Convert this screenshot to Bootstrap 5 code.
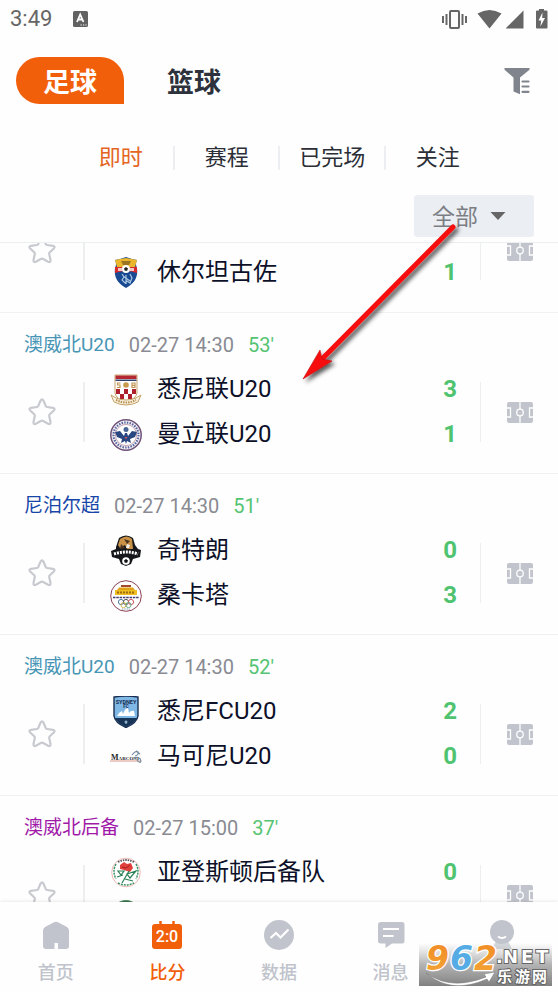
<!DOCTYPE html>
<html lang="zh-CN">
<head>
<meta charset="utf-8">
<meta name="viewport" content="width=device-width, initial-scale=1">
<title>比分</title>
<link href="https://cdn.jsdelivr.net/npm/bootstrap@5.3.0/dist/css/bootstrap.min.css" rel="stylesheet">
<style>
  body { font-family: Roboto, "Noto Sans CJK SC", sans-serif; background: #fefefe; color: #0c1028; }
  button { border: 0; background: none; padding: 0; }
  svg { display: block; flex: none; }
  .status-bar { height: 38px; padding: 0 10px; gap: 21px; font-size: 22px; line-height: 38px; color: #666; }
  .sport-bar { padding: 19px 28px 0 16px; font-size: 27px; line-height: 40px; }
  .sport-tab { width: 108px; height: 47px; padding-top: 5px; color: #2d323c; }
  .sport-tab.active { background: #f25f0b; color: #fff; border-radius: 24px 24px 0 24px; }
  .time-tabs { margin: 39px 68px 0; font-size: 22px; line-height: 30px; }
  .time-tabs a { color: #2b2e36; text-decoration: none; }
  .time-tabs a.active { color: #e3651f; }
  .time-tabs a + a::before { content: ""; align-self: center; width: 2px; height: 24px; margin-left: -1px; background: #eceef1; }
  .filter-row { padding: 22px 24px 5px; }
  .filter-box { width: 120px; height: 42px; padding: 0 28px 0 18px; background: #ebeef3; border-radius: 3px; }
  .filter-box select { appearance: none; border: 0; background: none; padding: 3px 0 0; font-size: 23px; line-height: 39px; color: #7b7e83; outline: 0; }
  .match-list { border-top: 1px solid #eceff0; min-height: 0; flex: 1 1 0; }
  .match { border-bottom: 1px solid #f1f1f2; padding-bottom: 16px; }
  .match.cut { margin-top: -38px; padding-bottom: 17px; }
  .match-head { padding: 17px 24px 7px; gap: 14px; font-size: 20px; line-height: 30px; color: #898a92; }
  .league { font-size: 19px; }
  .sky { color: #4795b5; } .navy { color: #1746a8; } .plum { color: #a019a8; }
  .live { color: #55c472; }
  .star-col { width: 83px; }
  .field-col { width: 77px; }
  .rule { width: 2px; height: 60px; background: #eceef0; }
  .rule.thin { width: 1px; }
  .team { height: 45px; gap: 15px; padding: 0 23px 0 25px; font-size: 24px; line-height: 45px; }
  .team strong { color: #4fc36f; font-weight: 700; }
  .tab-bar { height: 90px; background: #fefefe; box-shadow: 0 -1px 3px #00000014; padding-top: 17px; font-size: 18px; line-height: 26px; font-weight: 500; }
  .tab-bar a { color: #bfc3cb; text-decoration: none; gap: 9px; }
  .tab-bar a.active { color: #f25f0b; }
  .watermark { right: 6px; bottom: 6px; }
  .pointer { left: 296px; top: 218px; pointer-events: none; }
</style>
<script src="https://cdn.jsdelivr.net/npm/bootstrap@5.3.0/dist/js/bootstrap.bundle.min.js"></script>
</head>
<body>
<svg width="0" height="0" class="position-absolute" aria-hidden="true">
  <symbol id="star" viewBox="0 0 28 28"><path d="M12.6 2.6Q14 .2 15.400 2.600L17.800 8.100Q18.100 8.900 19 9L25 9.800Q27.700 10.400 25.800 12.500L21.800 16.200Q21 17 21.200 18L22.500 24Q22.700 26.800 20.100 25.800L15.200 23Q14 22.400 12.800 23L7.900 25.800Q5.300 26.800 5.500 24L6.800 18Q7 17 6.200 16.200L2.200 12.500Q.3 10.400 3 9.800L9 9Q9.900 8.900 10.200 8.100Z" fill="none" stroke="#c8cad0" stroke-width="2.200"/></symbol>
  <symbol id="field" viewBox="0 0 26 21"><rect width="26" height="21" rx="2" fill="#c1c4cc"/><g fill="none" stroke="#fefefe" stroke-width="1.300"><path d="M13 0V7M13 14V21M0 6H3.500V15H0M26 6H22.500V15H26"/><circle cx="13" cy="10.500" r="3.300"/></g></symbol>
</svg>
<div class="position-relative d-flex flex-column vh-100 overflow-hidden">
  <div class="status-bar d-flex align-items-center flex-shrink-0">
    <span>3:49</span>
    <svg width="15" height="16" viewBox="0 0 15 16"><rect width="15" height="16" rx="1.500" fill="#626262"/><path d="M4 11 7.200 3.500 10.500 11M5.200 8.500H9.400" fill="none" stroke="#fff" stroke-width="1.800"/><path d="M7.500 14h1.200M10 14h1.200M12.400 14h1.200" stroke="#fff" stroke-width="1.200"/></svg>
    <svg class="ms-auto" width="107" height="22" viewBox="0 0 107 22"><g fill="#666"><path d="M1 8h2v7H1zM4.500 6h2v11h-2zM20.500 6h2v11h-2zM24 8h2v7h-2z"/><rect x="9" y="3" width="9" height="17" rx="1" fill="none" stroke="#666" stroke-width="2"/><path d="M36.500 5.500Q48.500-1.500 60.500 5.500L48.500 20.500ZM65 20.500V20L82.500 2.500V20.500ZM95 3.500Q95 2.500 96 2.500H98V1h5V2.500h2.500Q106.500 2.500 106.500 3.500V19.500Q106.500 20.500 105.500 20.500H96Q95 20.500 95 19.500Z"/></g><path d="M101.500 4.500 97.500 12.500H100.200L99.400 18.500 104 10H101.200Z" fill="#fff"/></svg>
  </div>

  <header class="sport-bar d-flex align-items-center">
    <button class="sport-tab active fw-bold" type="button">足球</button>
    <button class="sport-tab fw-bold ms-3" type="button">篮球</button>
    <button class="ms-auto" type="button" aria-label="筛选"><svg width="26" height="28" viewBox="0 0 26 28"><path d="M.5 1H25.500V2.800L16 10.500V27.300L9.500 24.500V10.500L.5 2.800Z" fill="#80848d"/><path d="M18.500 14.500H24.500M18.500 19.500H24.500M18.500 24.800H24.500" stroke="#80848d" stroke-width="2.200" stroke-linecap="round"/></svg></button>
  </header>

  <nav class="time-tabs row g-0 text-center">
    <a class="col d-flex active" href="#"><span class="flex-fill">即时</span></a>
    <a class="col d-flex" href="#"><span class="flex-fill">赛程</span></a>
    <a class="col d-flex" href="#"><span class="flex-fill">已完场</span></a>
    <a class="col d-flex" href="#"><span class="flex-fill">关注</span></a>
  </nav>

  <div class="filter-row d-flex justify-content-end">
    <label class="filter-box d-flex align-items-center justify-content-between">
      <select aria-label="赛事范围"><option>全部</option></select>
      <svg width="16" height="8" viewBox="0 0 16 8"><path d="M.5 0H15.500L8 8Z" fill="#666"/></svg>
    </label>
  </div>

  <main class="match-list overflow-hidden">
    <article class="match cut">
      <div class="d-flex align-items-center">
        <button class="star-col d-flex justify-content-center" type="button" aria-label="关注"><svg width="28" height="28"><use href="#star"/></svg></button>
        <div class="rule"></div>
        <div class="flex-fill">
          <div class="team"></div>
          <div class="team d-flex align-items-center">
            <svg width="32" height="32" viewBox="0 0 32 32"><path d="M5 3 10 2 16 0 22 2 27 3Q25 7 27 11 29 24 16 31 3 24 5 11 7 7 5 3Z" fill="#194a91"/><path d="M5 3 10 2 16 1 22 2 27 3 25 10H7Z" fill="#eab62c"/><path d="M5 10H27V16Q16 12 5 16Z" fill="#d62a2c"/><path d="M11 4H21L19 8H13Z" fill="#9b7424"/><path d="M8 11h4v3H8zM20 11h4v3h-4z" fill="#f0c9c4"/><circle cx="16" cy="12" r="4" fill="#fff"/><path d="M16 10l2 1.500-.8 2.200h-2.400L14 11.500Z" fill="#222"/><path d="M12 17l2 3-2 3 3 3 2-2 3 2 2-5-2-4M16 18v9M13 19l7 5" fill="none" stroke="#a9c6e2" stroke-width="1.200"/></svg>
            <span>休尔坦古佐</span><strong class="ms-auto">1</strong>
          </div>
        </div>
        <div class="rule thin"></div>
        <a class="field-col d-flex justify-content-center" href="#" aria-label="赛况"><svg width="26" height="21"><use href="#field"/></svg></a>
      </div>
    </article>

    <article class="match">
      <div class="match-head d-flex"><span class="league sky">澳威北U20</span><time>02-27 14:30</time><span class="live">53'</span></div>
      <div class="d-flex align-items-center">
        <button class="star-col d-flex justify-content-center" type="button" aria-label="关注"><svg width="28" height="28"><use href="#star"/></svg></button>
        <div class="rule"></div>
        <div class="flex-fill">
          <div class="team d-flex align-items-center">
            <svg width="32" height="32" viewBox="0 0 32 32"><path d="M5 1H27V19Q26 25 16 28 6 25 5 19Z" fill="#fff" stroke="#c6a468"/><path d="M5.500 1.500H26.500V5H5.500Z" fill="#b42832"/><path d="M5.500 5.500h21v1.500h-21z" fill="#34436e"/><path d="M6 15h4v5H6zM14 15h4v5h-4zM22 15h4v5h-4zM10 20h4v5h-4zM18 20h4v5h-4z" fill="#ae202b"/><g fill="none" stroke="#c09550" stroke-width="1.200"><path d="M10.500 9H7.500V11H10V13.500H7M22 9V13.500H25V9ZM22 11.300H25"/></g><circle cx="16" cy="11" r="2.800" fill="#c79a4c"/><path d="M1 21 6 24Q16 28 26 24L31 21 28 28Q16 34 4 28Z" fill="#faf3e3" stroke="#c4a265"/><path d="M6 26Q16 31 26 26" fill="none" stroke="#b58f50" stroke-width="2" stroke-dasharray="1.500 1"/></svg>
            <span>悉尼联U20</span><strong class="ms-auto">3</strong>
          </div>
          <div class="team d-flex align-items-center">
            <svg width="32" height="32" viewBox="0 0 32 32"><circle cx="16" cy="16" r="15.200" fill="#f5f2f6" stroke="#6e5178" stroke-width="1.500"/><circle cx="16" cy="16" r="12.500" fill="none" stroke="#56659b" stroke-width="2.200" stroke-dasharray="1.500 1.200"/><circle cx="16" cy="16" r="10.600" fill="#fff" stroke="#b18295" stroke-width=".7"/><path d="M5 13 10 12 14 17 15 14H17L18 17 22 12 27 13 25 18 20 20 21 24 17 22 16 25 15 22 11 24 12 20 7 18Z" fill="#28467f"/><circle cx="16" cy="10.500" r="2.500" fill="#486594"/><path d="M14.500 18h3l-1.500 2.500Z" fill="#cb5362"/></svg>
            <span>曼立联U20</span><strong class="ms-auto">1</strong>
          </div>
        </div>
        <div class="rule thin"></div>
        <a class="field-col d-flex justify-content-center" href="#" aria-label="赛况"><svg width="26" height="21"><use href="#field"/></svg></a>
      </div>
    </article>

    <article class="match">
      <div class="match-head d-flex"><span class="league navy">尼泊尔超</span><time>02-27 14:30</time><span class="live">51'</span></div>
      <div class="d-flex align-items-center">
        <button class="star-col d-flex justify-content-center" type="button" aria-label="关注"><svg width="28" height="28"><use href="#star"/></svg></button>
        <div class="rule"></div>
        <div class="flex-fill">
          <div class="team d-flex align-items-center">
            <svg width="32" height="32" viewBox="0 0 32 32"><path d="M6 12 9 3Q16-2 23 3L25 10 28 14 31 15 30 22 23 24 21 29 16 31 11 29 9 24 2 22 1 16 6 14Z" fill="#15171a"/><path d="M10 4Q17-1 22 4L23 14 17 14 15 10 10 13 8 10Z" fill="#c99247"/><path d="M14 4 20 6 17 9ZM11 9 15 13 10 14Z" fill="#4d3420"/><path d="M17 9 20 10 19 13 16 13Z" fill="#eee"/><path d="M4 19Q16 15 28 19" fill="none" stroke="#fff" stroke-width="3" stroke-dasharray="2 1"/><circle cx="16" cy="26" r="3.800" fill="#fff"/><path d="M16 24l2 1.500-.8 2.300h-2.400L14 25.500Z" fill="#111"/></svg>
            <span>奇特朗</span><strong class="ms-auto">0</strong>
          </div>
          <div class="team d-flex align-items-center">
            <svg width="32" height="32" viewBox="0 0 32 32"><circle cx="16" cy="16" r="15.300" fill="#fff" stroke="#8a4050" stroke-width="1"/><path d="M11 5H21V7H11Z" fill="#a24a29"/><path d="M9 7.500H23L25 10H7Z" fill="#e0a117"/><path d="M5 10H27V15H5Z" fill="#edbd22"/><path d="M7 12.500H25" stroke="#a06c10" stroke-width="2" stroke-dasharray="2 1"/><path d="M3 17.500H29" stroke="#423e6d" stroke-width="1.700" stroke-dasharray="2.500 .8"/><g fill="none"><circle cx="11" cy="22" r="2.600" stroke="#4a78aa"/><circle cx="16" cy="22" r="2.600" stroke="#555"/><circle cx="21" cy="22" r="2.600" stroke="#ce5761"/><circle cx="13.500" cy="25" r="2.600" stroke="#d8b853"/><circle cx="18.500" cy="25" r="2.600" stroke="#65a886"/></g><path d="M12 29H20" stroke="#8295ad" stroke-dasharray="1 .7"/></svg>
            <span>桑卡塔</span><strong class="ms-auto">3</strong>
          </div>
        </div>
        <div class="rule thin"></div>
        <a class="field-col d-flex justify-content-center" href="#" aria-label="赛况"><svg width="26" height="21"><use href="#field"/></svg></a>
      </div>
    </article>

    <article class="match">
      <div class="match-head d-flex"><span class="league sky">澳威北U20</span><time>02-27 14:30</time><span class="live">52'</span></div>
      <div class="d-flex align-items-center">
        <button class="star-col d-flex justify-content-center" type="button" aria-label="关注"><svg width="28" height="28"><use href="#star"/></svg></button>
        <div class="rule"></div>
        <div class="flex-fill">
          <div class="team d-flex align-items-center">
            <svg width="32" height="32" viewBox="0 0 32 32"><path d="M4 1Q16-1 28 1V20Q27 27 16 31.500 5 27 4 20Z" fill="#80b8e5" stroke="#172d51" stroke-width="1.400"/><path d="M5 22H27Q25 27 16 31 7 27 5 22Z" fill="#173356"/><path d="M7 20Q9 16 12 15L13 18Q15 12 18 12L19 17Q21 14 24 15L25 20Z" fill="#fff"/><text x="16" y="7.500" font-size="5.500" font-weight="700" text-anchor="middle" fill="#172d51">SYDNEY</text><text x="16" y="12" font-size="4.500" font-weight="700" text-anchor="middle" fill="#172d51">FC</text><path d="M16 24.500V28M14.500 26H17.500" stroke="#b5d9ef"/></svg>
            <span>悉尼FCU20</span><strong class="ms-auto">2</strong>
          </div>
          <div class="team d-flex align-items-center">
            <svg width="32" height="32" viewBox="0 0 32 32"><path d="M0 20H31" stroke="#e7b9ae" stroke-width="1.500"/><text x="1" y="18.500" font-family="Liberation Serif" font-size="8" font-weight="700" fill="#25262b">M<tspan font-size="5">ARCONI</tspan></text><path d="M22 14Q26 9 28 11 29 14 25 15M24 17Q30 15 31 20 30 23 27 19M26 10 30 13" fill="none" stroke="#758ca0" stroke-width="1.200"/></svg>
            <span>马可尼U20</span><strong class="ms-auto">0</strong>
          </div>
        </div>
        <div class="rule thin"></div>
        <a class="field-col d-flex justify-content-center" href="#" aria-label="赛况"><svg width="26" height="21"><use href="#field"/></svg></a>
      </div>
    </article>

    <article class="match">
      <div class="match-head d-flex"><span class="league plum">澳威北后备</span><time>02-27 15:00</time><span class="live">37'</span></div>
      <div class="d-flex align-items-center">
        <button class="star-col d-flex justify-content-center" type="button" aria-label="关注"><svg width="28" height="28"><use href="#star"/></svg></button>
        <div class="rule"></div>
        <div class="flex-fill">
          <div class="team d-flex align-items-center">
            <svg width="32" height="32" viewBox="0 0 32 32"><circle cx="16" cy="15.500" r="14.300" fill="#fff" stroke="#edb9b7"/><path d="M8 5Q16 1 24 5" fill="none" stroke="#555" stroke-width="1.800" stroke-dasharray="1.500 1"/><path d="M6 7Q2 14 6 22M26 7Q30 14 26 22M8 26Q16 30 24 26" fill="none" stroke="#3d9367" stroke-width="1.500" stroke-dasharray="2 1"/><path d="M10 8 14 5 17 7 21 6 23 11 20 15 14 13 10 12Z" fill="#e0423b"/><path d="M12 10 16 11 20 8" fill="none" stroke="#a91f25"/><path d="M8 14H14L11 18ZM17 17 26 14 20 21ZM19 14 12 26M7 20 13 18M15 22 23 24" fill="#fff" stroke="#298156" stroke-width="1.200"/></svg>
            <span>亚登斯顿后备队</span><strong class="ms-auto">0</strong>
          </div>
          <div class="team d-flex align-items-center">
            <svg width="32" height="36" viewBox="0 0 32 36"><ellipse cx="16" cy="18" rx="15.500" ry="17.500" fill="#34704a" stroke="#5a8b6b"/></svg>
          </div>
        </div>
        <div class="rule thin"></div>
        <a class="field-col d-flex justify-content-center" href="#" aria-label="赛况"><svg width="26" height="21"><use href="#field"/></svg></a>
      </div>
    </article>
  </main>

  <nav class="tab-bar position-relative row g-0 flex-shrink-0">
    <a class="col d-flex flex-column align-items-center" href="#"><svg width="32" height="32" viewBox="0 0 32 32"><path d="M3 11.500Q3 9.500 5 8L13.500 3.500Q16 2 18.500 3.500L27 8Q29 9.500 29 11.500V27Q29 30 26 30H18V24H14.500V30H6Q3 30 3 27Z" fill="#c1c4cc"/></svg>首页</a>
    <a class="col d-flex flex-column align-items-center active" href="#"><svg width="32" height="32" viewBox="0 0 32 32"><path d="M9.500 2V7M22.500 2V7" stroke="#f25f0b" stroke-width="2.500"/><rect x="1" y="5" width="30" height="25" rx="3" fill="#f25f0b"/><text x="16" y="23" font-size="16" font-weight="500" text-anchor="middle" fill="#fff">2:0</text></svg>比分</a>
    <a class="col d-flex flex-column align-items-center" href="#"><svg width="32" height="32" viewBox="0 0 32 32"><circle cx="16" cy="16" r="15" fill="#c1c4cc"/><path d="M7.500 19 13 14 17.500 18.500 25.500 10.500" fill="none" stroke="#fff" stroke-width="2.200"/></svg>数据</a>
    <a class="col d-flex flex-column align-items-center" href="#"><svg width="32" height="32" viewBox="0 0 32 32"><path d="M6 3H27Q29.500 3 29.500 5.500V22Q29.500 24.500 27 24.500H17L10.500 29V24.500H6Q3 24.500 3 22V5.500Q3 3 6 3Z" fill="#c1c4cc"/><path d="M8 10H24M8 17H18.500" stroke="#fff" stroke-width="2.200"/></svg>消息</a>
    <a class="col d-flex flex-column align-items-center" href="#" aria-label="我的"><svg width="32" height="32" viewBox="0 0 32 32"><path d="M10 22H22L26 30H6Z" fill="#d4d7dc"/><circle cx="16" cy="13" r="12" fill="#c1c4cc"/><path d="M12 17.500Q16 20.500 20 17.500" fill="none" stroke="#fff" stroke-width="2"/></svg></a>
    <svg class="watermark position-absolute p-0 w-auto" width="133" height="53" viewBox="0 0 133 53" role="img" aria-label="962.NET 乐游网">
      <defs>
        <linearGradient id="shade" x2="0" y2="1"><stop stop-color="#aaa" stop-opacity="0"/><stop offset=".5" stop-color="#9a9a9a" stop-opacity=".75"/><stop offset="1" stop-color="#808080"/></linearGradient>
        <linearGradient id="amber" x2="0" y2="1"><stop stop-color="#f08a24"/><stop offset="1" stop-color="#f4a637"/></linearGradient>
      </defs>
      <rect y="10" width="133" height="43" fill="url(#shade)"/>
      <path d="M7 40Q32 58 67 44L65 41 76 39 70 49 68 46Q32 62 7 40Z" fill="#fff" stroke="#777" stroke-width=".5"/>
      <g font-family="DejaVu Sans" font-weight="700" font-style="italic" font-size="33" stroke="#fff" stroke-width="2.500" paint-order="stroke"><text y="37" x="7" fill="url(#amber)">9</text><text y="37" x="31" fill="#55ace4">6</text><text y="37" x="55" fill="url(#amber)">2</text></g>
      <g fill="#fff" stroke="#666" stroke-width="2" paint-order="stroke" font-weight="700"><text y="30" font-family="DejaVu Sans" font-size="18" x="77 84 102 117">.NET</text><text y="49" font-size="15" x="78 96 113">乐游网</text></g>
    </svg>
  </nav>

  <svg class="pointer position-absolute" width="172" height="176" viewBox="0 0 172 176" aria-hidden="true">
    <defs><filter id="drop" x="-10%" y="-10%" width="125%" height="125%"><feDropShadow dx="3" dy="3" stdDeviation="2" flood-color="#000" flood-opacity=".65"/></filter></defs>
    <g filter="url(#drop)"><path d="M157 9 27 140" stroke="#f60a0a" stroke-width="5" stroke-linecap="round"/><path d="M7 161 24 132 26 141 36 143Z" fill="#f60a0a" stroke="#c01010" stroke-width=".6"/></g>
  </svg>
</div>
</body>
</html>
